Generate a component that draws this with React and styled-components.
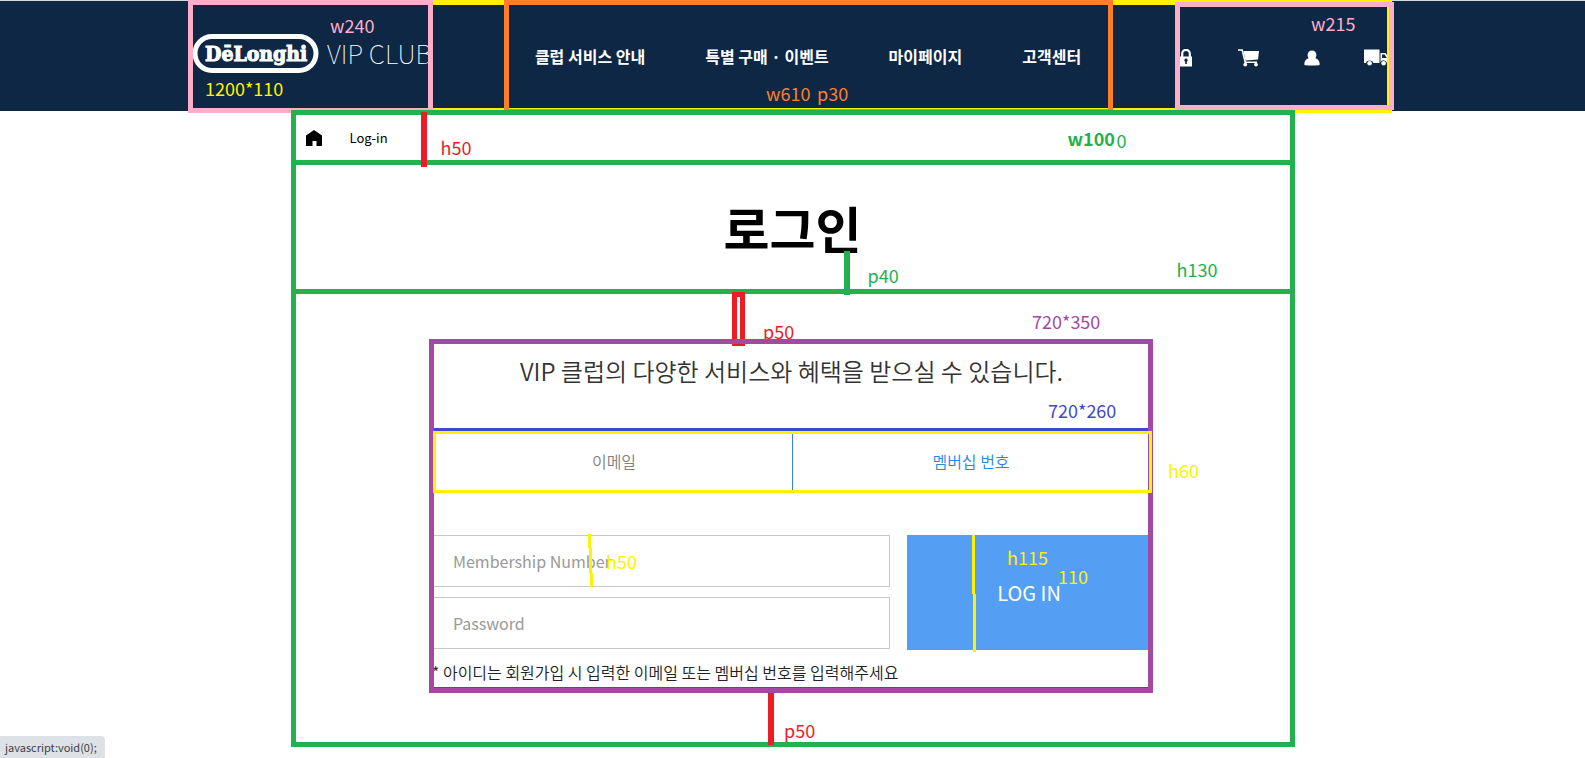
import React from "react";
import styled, { createGlobalStyle } from "styled-components";

const color = {
  navy: "#0d2745",
  pink: "#ffaec9",
  yellow: "#fff200",
  orange: "#ff7f27",
  green: "#22b14c",
  red: "#ed1c24",
  purple: "#a349a4",
  blue: "#3f48cc",
  accent: "#2b85e5",
  button: "#549ff3",
};

const GlobalStyle = createGlobalStyle`
  *, *::before, *::after { box-sizing: border-box; }
  body {
    margin: 0;
    min-height: 100vh;
    background: #fff;
    color: #000;
    font-family: "Noto Sans CJK KR", "Noto Sans", sans-serif;
    font-size: 16px;
  }
  a { color: inherit; text-decoration: none; }
  button, input { font-family: inherit; }
`;

/* ---------- annotation marks laid over the page ---------- */

const Frame = styled.div`
  position: absolute;
  top: ${(p) => p.$top}px;
  right: ${(p) => p.$right}px;
  bottom: ${(p) => p.$bottom}px;
  left: ${(p) => p.$left}px;
  border: 5px solid ${(p) => color[p.$color]};
  pointer-events: none;
`;

const Bar = styled.div`
  position: absolute;
  left: ${(p) => p.$x}px;
  top: ${(p) => p.$y}px;
  width: 6px;
  height: ${(p) => p.$h}px;
  background: ${(p) => color[p.$color]};
  pointer-events: none;
`;

const Note = styled.span`
  position: absolute;
  left: ${(p) => p.$x}px;
  top: ${(p) => p.$y}px;
  color: ${(p) => color[p.$color]};
  font-size: 18px;
  line-height: 20px;
  font-weight: ${(p) => (p.$bold ? 700 : 400)};
  white-space: nowrap;
  pointer-events: none;
`;

const Stroke = styled.svg`
  position: absolute;
  left: ${(p) => p.$x}px;
  top: ${(p) => p.$y}px;
  fill: ${color.yellow};
  pointer-events: none;
`;

/* ---------- header ---------- */

const Header = styled.header`
  border-top: 1px solid #d5d9dc;
  background: ${color.navy};
  color: #fff;
`;

const HeaderInner = styled.div`
  position: relative;
  display: flex;
  align-items: center;
  justify-content: space-between;
  max-width: 1201px;
  height: 110px;
  margin: 0 auto;
`;

const Logo = styled.a`
  display: flex;
  width: 240px;
  padding-bottom: 4px;
`;

const Nav = styled.nav`
  display: flex;
  gap: 60px;
  padding: 0 30px 0 36px;
  font-weight: 700;
  line-height: 24px;
  white-space: nowrap;
`;

const Tools = styled.div`
  display: flex;
  align-items: center;
  gap: 44px;
  width: 215px;
  padding: 4px 0 0 2px;
`;

const ToolLink = styled.a`
  display: flex;
`;

function LogoArt() {
  return (
    <svg width="240" height="44" viewBox="0 0 240 44" role="img" aria-label="DeLonghi VIP Club">
      <rect x="3" y="4.5" width="121" height="34" rx="17" fill="none" stroke="#fff" strokeWidth="5" />
      <text
        x="13"
        y="29"
        fontFamily="'DejaVu Serif Condensed', 'DejaVu Serif', serif"
        fontWeight="700"
        fontSize="21"
        fill="#fff"
        stroke="#fff"
        strokeWidth="1"
      >
        DēLonghi
      </text>
      <text x="135" y="32" fontWeight="100" fontSize="26" fill="#fff">
        VIP CLUB
      </text>
    </svg>
  );
}

const LockIcon = () => (
  <svg width="14" height="18" viewBox="0 0 14 18" aria-hidden="true">
    <path d="M2.2 8V4.600a3.800 3.800 0 0 1 7.600 0V8" fill="none" stroke="#fff" strokeWidth="2.2" />
    <path
      fillRule="evenodd"
      fill="#fff"
      d="M0 7.500h12V17.500H0zM6 9.600a1.700 1.700 0 0 0-.8 3.200V15h1.600v-2.200A1.700 1.700 0 0 0 6 9.600z"
    />
  </svg>
);

const CartIcon = () => (
  <svg width="22" height="18" viewBox="0 0 22 18" aria-hidden="true">
    <path d="M0 1h4.200l3 12.200H19" fill="none" stroke="#fff" strokeWidth="1.6" />
    <path d="M5.500 2H21l-1 8.600L7.400 11.400z" fill="#fff" />
    <circle cx="7.3" cy="15.6" r="1.9" fill="#fff" />
    <circle cx="18" cy="15.6" r="1.9" fill="#fff" />
  </svg>
);

const UserIcon = () => (
  <svg width="16" height="18" viewBox="0 0 16 18" aria-hidden="true">
    <path
      fill="#fff"
      d="M8 1.500a4.400 4.400 0 0 1 4.400 4.500c0 1.300-.4 2.400-1 3.300 2.600.8 4.200 2.800 4.300 5.600 0 .8-.4 1.200-1.200 1.300-4.200.5-8.800.5-13 0-.8-.1-1.200-.5-1.200-1.300.1-2.800 1.700-4.800 4.300-5.600-.6-.9-1-2-1-3.300A4.400 4.400 0 0 1 8 1.500z"
    />
  </svg>
);

const TruckIcon = () => (
  <svg width="25" height="18" viewBox="0 0 25 18" aria-hidden="true">
    <path d="M0 .5h15.500v11H0z" fill="#fff" />
    <path d="M0 11h15.500v3H9.200a3.700 3.700 0 0 0-7.200 0H0z" fill="#fff" />
    <path
      fillRule="evenodd"
      fill="#fff"
      d="M16.500 4h5l3.500 5v5h-2a3.600 3.600 0 0 0-6.500-1zM18 5.500V9h4.800l-2.200-3.500z"
    />
    <circle cx="5.600" cy="14.200" r="2.300" fill="#fff" />
    <circle cx="19.600" cy="14.200" r="2.300" fill="#fff" />
  </svg>
);

/* ---------- page body ---------- */

const Main = styled.main`
  position: relative;
  max-width: 1004px;
  margin: -1px auto 0;
  padding-bottom: 52px;
  border: 5px solid ${color.green};
`;

const Breadcrumb = styled.nav`
  display: flex;
  align-items: center;
  gap: 28px;
  height: 50px;
  padding: 0 10px;
  border-bottom: 5px solid ${color.green};
  font-size: 13px;
  line-height: 20px;
`;

const HomeIcon = styled.svg`
  display: block;
`;

const TitleArea = styled.div`
  height: 129px;
  padding-top: 26px;
  border-bottom: 5px solid ${color.green};
  margin-bottom: 47px;
`;

const Title = styled.h1`
  margin: 0;
  font-size: 50px;
  line-height: 72px;
  font-weight: 700;
  text-align: center;
`;

const LoginBox = styled.section`
  position: relative;
  max-width: 721px;
  margin: 0 auto;
`;

const Lead = styled.p`
  height: 87px;
  margin: 0;
  padding: 12px 2px 0 0;
  color: #333;
  font-size: 24px;
  line-height: 36px;
  font-weight: 350;
  text-align: center;
`;

const AccessArea = styled.div`
  min-height: 262px;
  border: solid ${color.blue};
  border-width: 3px 0;
`;

const Tabs = styled.div`
  position: relative;
  z-index: 1;
  display: flex;
  height: 62px;
  margin: 0 1px 42px;
  border: 3px solid ${color.yellow};
`;

const Tab = styled.button`
  flex: 1;
  padding: 0 0 2px;
  border: 0;
  border-right: ${(p) => (p.$active ? "0" : `1px solid ${color.accent}`)};
  background: none;
  color: ${(p) => (p.$active ? color.accent : "#808080")};
  font-size: 16px;
  font-weight: 350;
`;

const Form = styled.form`
  display: flex;
  gap: 17px;
`;

const Fields = styled.div`
  display: flex;
  flex: 1;
  flex-direction: column;
  gap: 10px;
`;

const Field = styled.input`
  width: 100%;
  height: 52px;
  padding: 0 20px;
  border: 1px solid #c8c8c8;
  background: #fff;
  font-size: 16px;
  &::placeholder {
    color: #999;
    opacity: 1;
  }
`;

const Submit = styled.button`
  width: 246px;
  height: 115px;
  padding: 0 2px 0 0;
  border: 0;
  background: ${color.button};
  color: #fff;
  font-size: 20px;
`;

const Hint = styled.p`
  margin: 10px 0 0;
  color: #222;
  font-size: 16px;
  line-height: 24px;
  font-weight: 350;
`;

const StatusBar = styled.div`
  position: fixed;
  left: 0;
  bottom: 0;
  height: 22px;
  padding: 0 8px 0 5px;
  border-top-right-radius: 4px;
  background: #dee1e6;
  color: #3c4043;
  font-size: 11px;
  line-height: 22px;
`;

export default function App() {
  return (
    <>
      <GlobalStyle />
      <Header>
        <HeaderInner>
          <Logo href="#">
            <LogoArt />
          </Logo>
          <Nav>
            <a href="#club">클럽 서비스 안내</a>
            <a href="#event">특별 구매 · 이벤트</a>
            <a href="#my">마이페이지</a>
            <a href="#help">고객센터</a>
          </Nav>
          <Tools>
            <ToolLink href="#login" aria-label="로그인"><LockIcon /></ToolLink>
            <ToolLink href="#cart" aria-label="장바구니"><CartIcon /></ToolLink>
            <ToolLink href="#account" aria-label="회원"><UserIcon /></ToolLink>
            <ToolLink href="#delivery" aria-label="배송"><TruckIcon /></ToolLink>
          </Tools>

          <Frame $color="yellow" $top={-1} $right={1} $bottom={-2} $left={-4} />
          <Frame $color="pink" $top={-1} $right={960} $bottom={-2} $left={-4} />
          <Frame $color="orange" $top={-1} $right={280} $bottom={-3} $left={312} />
          <Frame $color="pink" $top={1} $right={-1} $bottom={1} $left={983} />
          <Note $color="pink" $x={138} $y={14}>w240</Note>
          <Note $color="yellow" $x={13} $y={77}>1200*110</Note>
          <Note $color="orange" $x={574} $y={82}>w610</Note>
          <Note $color="orange" $x={625} $y={82}>p30</Note>
          <Note $color="pink" $x={1119} $y={12}>w215</Note>
        </HeaderInner>
      </Header>

      <Main>
        <Breadcrumb aria-label="breadcrumb">
          <a href="#home" aria-label="홈">
            <HomeIcon width="16" height="16" viewBox="0 0 16 16" aria-hidden="true">
              <path d="M8 0l8 5.500V16h-5.500v-5h-4v5H0V5.500z" />
            </HomeIcon>
          </a>
          <a href="#login">Log-in</a>
        </Breadcrumb>
        <TitleArea>
          <Title>로그인</Title>
        </TitleArea>

        <Bar $color="red" $x={125} $y={-3} $h={55} />
        <Bar $color="green" $x={548} $y={136} $h={44} />
        <Note $color="red" $x={145} $y={22}>h50</Note>
        <Note $color="green" $bold $x={772} $y={13}>w100</Note>
        <Note $color="green" $x={821} $y={15}>0</Note>
        <Note $color="green" $x={572} $y={150}>p40</Note>
        <Note $color="green" $x={881} $y={144}>h130</Note>

        <LoginBox>
          <Lead>VIP 클럽의 다양한 서비스와 혜택을 받으실 수 있습니다.</Lead>
          <AccessArea>
            <Tabs role="tablist">
              <Tab type="button" role="tab" aria-selected="false">이메일</Tab>
              <Tab type="button" role="tab" aria-selected="true" $active>멤버십 번호</Tab>
            </Tabs>
            <Form onSubmit={(e) => e.preventDefault()}>
              <Fields>
                <Field type="text" placeholder="Membership Number" aria-label="Membership Number" />
                <Field type="password" placeholder="Password" aria-label="Password" />
              </Fields>
              <Submit type="submit">LOG IN</Submit>
            </Form>
            <Hint>* 아이디는 회원가입 시 입력한 이메일 또는 멤버십 번호를 입력해주세요</Hint>
          </AccessArea>

          <Note $color="red" $x={331} $y={-20}>p50</Note>
          <Frame $color="red" $top={-49} $right={408} $bottom={344} $left={300} />
          <Frame $color="purple" $top={-2} $right={0} $bottom={-3} $left={-3} />
          <Bar $color="red" $x={336} $y={352} $h={52} />
          <Note $color="purple" $x={600} $y={-30}>720*350</Note>
          <Note $color="blue" $x={616} $y={59}>720*260</Note>
          <Note $color="yellow" $x={736} $y={119}>h60</Note>
          <Note $color="yellow" $x={174} $y={210}>h50</Note>
          <Note $color="yellow" $x={575} $y={206}>h115</Note>
          <Note $color="yellow" $x={626} $y={225}>110</Note>
          <Note $color="red" $x={352} $y={379}>p50</Note>
          <Stroke $x={156} $y={193} width="5" height="53" aria-hidden="true">
            <path d="M0 0h3v14h1v25h1v14h-3v-14h-1v-25h-1z" />
          </Stroke>
          <Stroke $x={540} $y={194} width="4" height="117" aria-hidden="true">
            <path d="M0 0h3v59h1v58h-3v-58h-1z" />
          </Stroke>
        </LoginBox>
      </Main>

      <StatusBar>javascript:void(0);</StatusBar>
    </>
  );
}
